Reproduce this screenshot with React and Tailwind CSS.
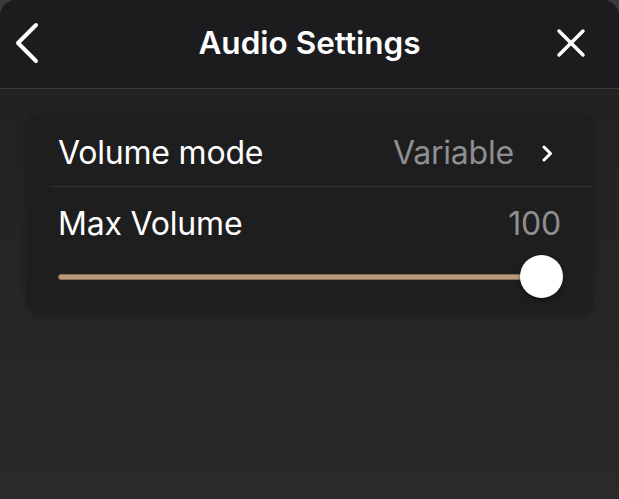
export default function App() {
  const value = 100;
  return (
    <div className="w-[619px] h-[499px] bg-[#3a3a3c] overflow-hidden" style={{ fontFamily: 'Inter, "Noto Sans", sans-serif' }}>
      <div className="h-full flex flex-col rounded-t-[16px] overflow-hidden bg-gradient-to-b from-[#202021] to-[#2a2a2a]">
        {/* header */}
        <div className="h-[89px] shrink-0 bg-[#1c1c1e] border-b border-[#3a3a3c] grid grid-cols-[90px_1fr_90px] items-center pb-[2px]">
          <button className="w-[28px] h-[42px] ml-[13px] flex items-center justify-center">
            <svg width="26" height="42" viewBox="0 0 26 42" fill="none" stroke="white" strokeWidth="4" strokeLinecap="round" strokeLinejoin="round">
              <path d="M22 3 L4 21 L22 39" />
            </svg>
          </button>
          <h1 className="text-white text-[31.5px] font-semibold text-center">Audio Settings</h1>
          <button className="w-[30px] h-[30px] ml-auto mr-[33px] flex items-center justify-center">
            <svg width="30" height="30" viewBox="0 0 30 30" fill="none" stroke="white" strokeWidth="3.5" strokeLinecap="round">
              <path d="M3 3 L27 27 M27 3 L3 27" />
            </svg>
          </button>
        </div>

        {/* body */}
        <div className="px-[26px] pt-[25px]">
          <div className="bg-[#1e1e1f] rounded-[14px] shadow-[0_2px_6px_rgba(0,0,0,0.25)]">
            <div className="h-[72px] flex items-center justify-between pl-[32px] pr-[40px] pt-[6px]">
              <span className="text-white text-[32px] tracking-[-0.2px]">Volume mode</span>
              <div className="flex items-center gap-[28px]">
                <span className="text-[#8e8e93] text-[32px] tracking-[-0.2px]">Variable</span>
                <svg width="11" height="17" viewBox="0 0 11 17" fill="none" stroke="white" strokeWidth="3" strokeLinecap="round" strokeLinejoin="round">
                  <path d="M2 2 L8.5 8.5 L2 15" />
                </svg>
              </div>
            </div>
            <div className="h-px bg-[#333335] ml-[24px]" />
            <div className="pl-[32px] pr-[32px] pt-[18px] pb-[16px]">
              <div className="flex items-center justify-between h-[38px]">
                <span className="text-white text-[32px] tracking-[-0.2px]">Max Volume</span>
                <span className="text-[#8e8e93] text-[32px] tracking-[-0.2px]">{value}</span>
              </div>
              <div className="relative h-[43px] mt-[12px] flex items-center">
                <div className="h-[6px] w-full rounded-full bg-[#b99a7d] border border-[#8a6f58] mr-[20px]" />
                <div className="absolute right-[-2px] top-0 w-[43px] h-[43px] rounded-full bg-white shadow-[0_2px_4px_rgba(0,0,0,0.4)]" />
              </div>
            </div>
          </div>
        </div>
      </div>
    </div>
  );
}
